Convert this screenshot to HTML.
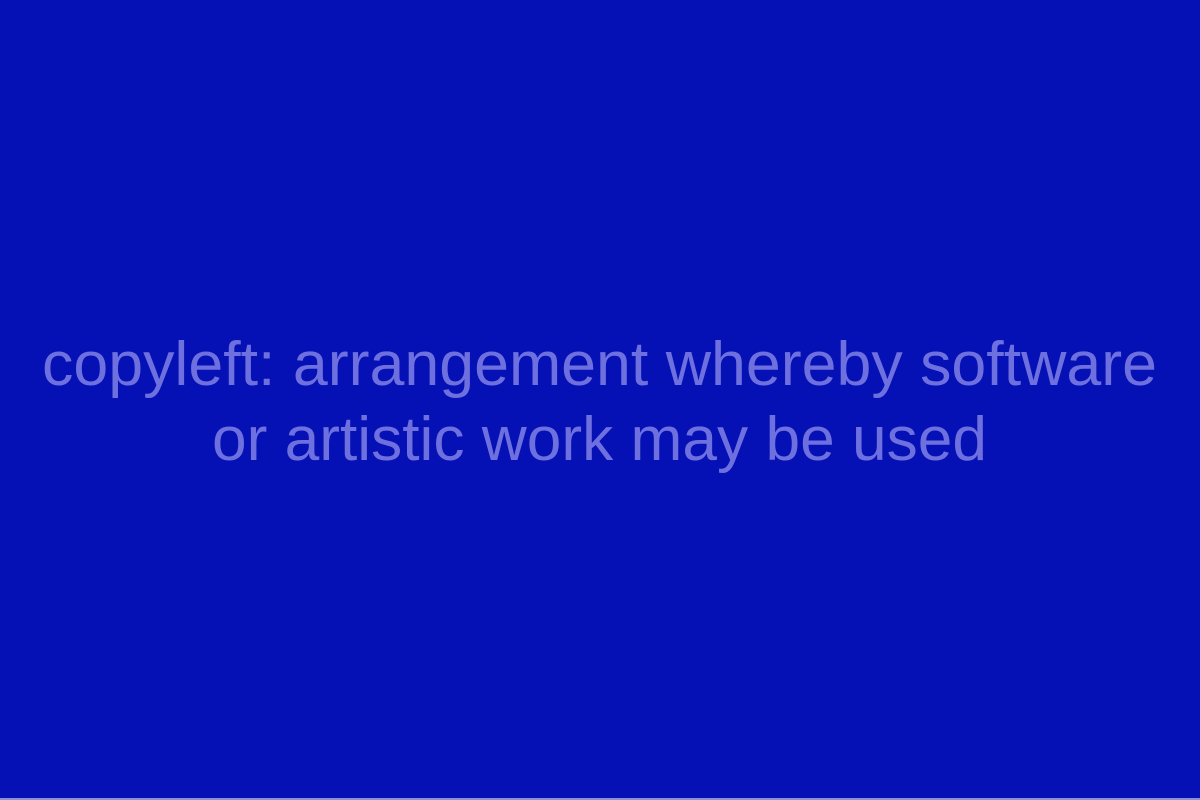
<!DOCTYPE html>
<html><head><meta charset="utf-8"><style>
html,body{margin:0;padding:0;width:1200px;height:800px;background:#0510b5;overflow:hidden}
svg{display:block}
</style></head><body>
<svg width="1200" height="800" viewBox="0 0 1200 800">
<rect width="1200" height="800" fill="#0510b5"/>
<rect x="0" y="798" width="1200" height="2" fill="#8a8fd8"/>
<g font-family="Liberation Sans, sans-serif" font-size="62" fill="#6d70de">
<text x="42" y="385" textLength="1115" lengthAdjust="spacingAndGlyphs">copyleft: arrangement whereby software</text>
<text x="212" y="460" textLength="775" lengthAdjust="spacingAndGlyphs">or artistic work may be used</text>
</g>
</svg>
</body></html>
